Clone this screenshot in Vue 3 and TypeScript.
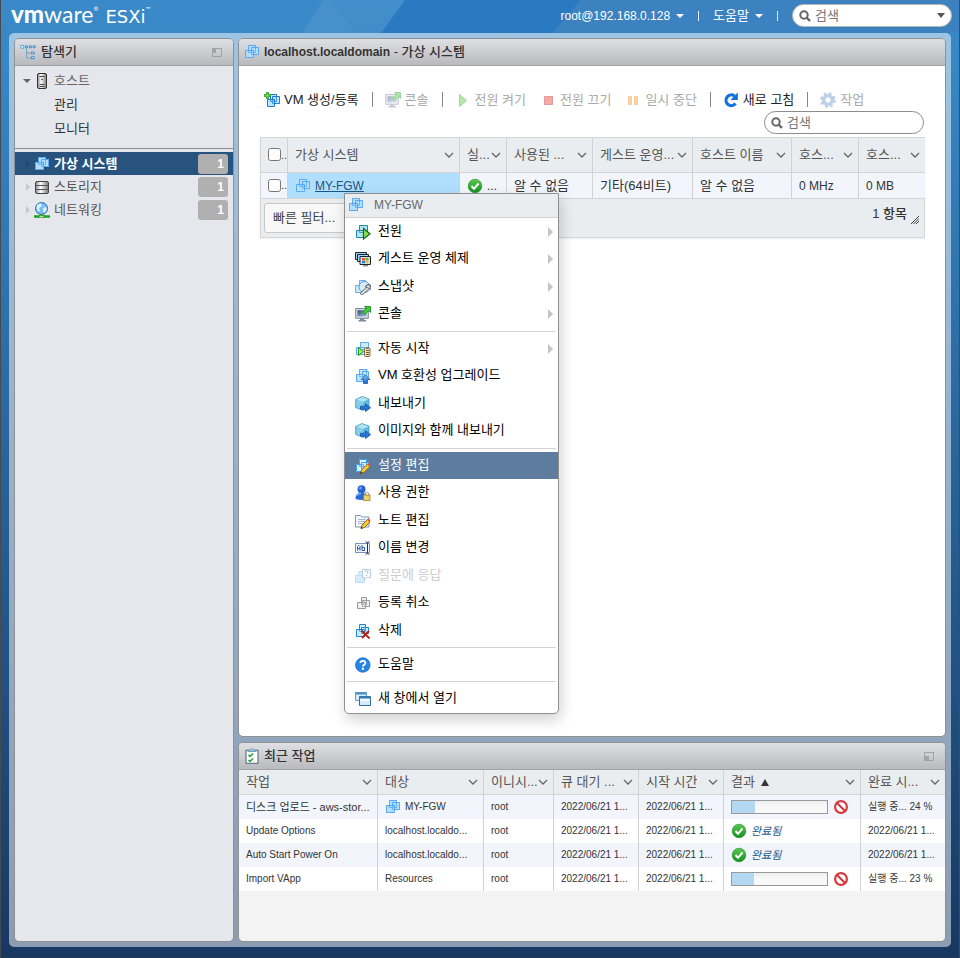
<script setup lang="ts">
import { ref } from 'vue'

interface MenuItem {
  label: string
  icon: string
  sub?: boolean
  active?: boolean
  disabled?: boolean
}
interface Column {
  label: string
  width: number
  sorted?: boolean
}
interface Task {
  name: string
  ko?: boolean
  target: string
  vm?: boolean
  percent?: number
  done: string
}

const globalQuery = ref('')
const vmQuery = ref('')
const quickFilter = ref('빠른 필터...')

const inventory = [
  { label: '가상 시스템', icon: 'vm', count: 1, active: true },
  { label: '스토리지', icon: 'storage', count: 1, active: false },
  { label: '네트워킹', icon: 'network', count: 1, active: false },
]

const toolbar = [
  [{ label: 'VM 생성/등록', icon: 'vm-add', disabled: false }],
  [{ label: '콘솔', icon: 'console', disabled: true }],
  [
    { label: '전원 켜기', icon: 'play', disabled: true },
    { label: '전원 끄기', icon: 'stop', disabled: true },
    { label: '일시 중단', icon: 'pause', disabled: true },
  ],
  [{ label: '새로 고침', icon: 'refresh', disabled: false }],
  [{ label: '작업', icon: 'gear', disabled: true }],
]

const vmColumns: Column[] = [
  { label: '가상 시스템', width: 172 },
  { label: '실...', width: 47 },
  { label: '사용된 ...', width: 86 },
  { label: '게스트 운영...', width: 100 },
  { label: '호스트 이름', width: 99 },
  { label: '호스...', width: 67 },
  { label: '호스...', width: 66 },
]

const menuGroups: MenuItem[][] = [
  [
    { label: '전원', icon: 'vm-power', sub: true },
    { label: '게스트 운영 체제', icon: 'guest', sub: true },
    { label: '스냅샷', icon: 'snapshot', sub: true },
    { label: '콘솔', icon: 'console', sub: true },
  ],
  [
    { label: '자동 시작', icon: 'autostart', sub: true },
    { label: 'VM 호환성 업그레이드', icon: 'upgrade' },
    { label: '내보내기', icon: 'export' },
    { label: '이미지와 함께 내보내기', icon: 'export' },
  ],
  [
    { label: '설정 편집', icon: 'vm-edit', active: true },
    { label: '사용 권한', icon: 'permission' },
    { label: '노트 편집', icon: 'note' },
    { label: '이름 변경', icon: 'rename' },
    { label: '질문에 응답', icon: 'question', disabled: true },
    { label: '등록 취소', icon: 'unregister' },
    { label: '삭제', icon: 'vm-delete' },
  ],
  [{ label: '도움말', icon: 'help' }],
  [{ label: '새 창에서 열기', icon: 'window' }],
]

const taskColumns: Column[] = [
  { label: '작업', width: 139 },
  { label: '대상', width: 106 },
  { label: '이니시...', width: 70 },
  { label: '큐 대기 ...', width: 85 },
  { label: '시작 시간', width: 85 },
  { label: '결과', width: 137, sorted: true },
  { label: '완료 시...', width: 84 },
]

const tasks: Task[] = [
  { name: '디스크 업로드 - aws-stor...', ko: true, target: 'MY-FGW', vm: true, percent: 24, done: '실행 중... 24 %' },
  { name: 'Update Options', target: 'localhost.localdo...', done: '2022/06/21 1...' },
  { name: 'Auto Start Power On', target: 'localhost.localdo...', done: '2022/06/21 1...' },
  { name: 'Import VApp', target: 'Resources', percent: 23, done: '실행 중... 23 %' },
]
</script>

<template>
  <div class="app">
    <svg class="sprite" aria-hidden="true">
      <defs>
        <linearGradient id="g-green" x1="0" y1="0" x2="0" y2="1">
          <stop offset="0" stop-color="#5fc94f" />
          <stop offset="1" stop-color="#109020" />
        </linearGradient>
        <linearGradient id="g-metal" x1="0" y1="0" x2="1" y2="0">
          <stop offset="0" stop-color="#8a8a8a" />
          <stop offset=".4" stop-color="#ffffff" />
          <stop offset="1" stop-color="#777777" />
        </linearGradient>
        <linearGradient id="g-blue" x1="0" y1="0" x2="0" y2="1">
          <stop offset="0" stop-color="#7cc4f7" />
          <stop offset="1" stop-color="#1565c8" />
        </linearGradient>
        <linearGradient id="g-screen" x1="0" y1="0" x2="1" y2="1">
          <stop offset="0" stop-color="#2d4a70" />
          <stop offset="1" stop-color="#a9c4e0" />
        </linearGradient>
      </defs>
      <symbol id="i-vm" viewBox="0 0 16 16">
        <path d="M4 1h8v2h3v8h-5v3H1V6h3z" fill="#c3e6fb" />
        <g fill="#8fd0fa" fill-opacity=".3" stroke="#4a9ff0" stroke-opacity=".85">
          <path d="M4.500 1.500h7v7h-7z" />
          <path d="M7.500 3.500h7v7h-7z" />
          <path d="M1.500 6.500h8v7h-8z" />
        </g>
      </symbol>
      <symbol id="i-vm-add" viewBox="0 0 16 16">
        <path d="M6 2h7v2h3v8h-5v3H3V6h3z" fill="#cdeefc" />
        <g fill="#8fd8f8" fill-opacity=".3" stroke="#1f7bd6">
          <path d="M6.500 2.500h6v7h-6z" />
          <path d="M8.500 4.500h7v7h-7z" />
          <path d="M3.500 7.500h7v7h-7z" />
        </g>
        <path d="M2.500 .500h2v2h2v2h-2v2h-2v-2h-2v-2h2z" fill="#6fdc48" stroke="#1d8a1d" stroke-width=".8" />
      </symbol>
      <symbol id="i-vm-power" viewBox="0 0 16 16">
        <path d="M4 1h9v9H9v4H1V6h3z" fill="#c3edf8" />
        <g fill="#8fd8f0" fill-opacity=".3" stroke="#1b8ba8">
          <path d="M4.500 1.500h8v7h-8z" />
          <path d="M1.500 6.500h8v7h-8z" />
        </g>
        <path d="M8.500 4.500l6.500 5.200-6.500 5.300z" fill="#8be34a" stroke="#12691c" stroke-width="1.200" />
      </symbol>
      <symbol id="i-guest" viewBox="0 0 16 16">
        <path d="M.500 1.500h11v7H.500z" fill="#9fd4f8" stroke="#222" />
        <path d="M2.500 3.500h11v7h-11z" fill="#9fd4f8" stroke="#222" />
        <path d="M5 5.500h10.500v8H5z" fill="#c9e6fa" stroke="#222" />
        <path d="M7 7h3v2.500H7z" fill="#e8582c" /><path d="M10.500 7h3v2.500h-3z" fill="#6cb52d" />
        <path d="M7 10h3v2.300H7z" fill="#2b7de0" /><path d="M10.500 10h3v2.300h-3z" fill="#f6b81f" />
        <path d="M8 14h5v1.500H8z" fill="#999" />
      </symbol>
      <symbol id="i-snapshot" viewBox="0 0 16 16">
        <g fill="#cde9fc" stroke="#66aef2">
          <path d="M4.500 1.500h6v6h-6z" /><path d="M.500 6.500h7v7h-7z" />
        </g>
        <circle cx="9.500" cy="8" r="5.500" fill="#dff0fb" fill-opacity=".85" stroke="#5b9bd0" />
        <path d="M7 14.500l5-5" stroke="#666" stroke-width="3.500" stroke-linecap="round" />
        <path d="M7 14.500l5-5" stroke="#ddd" stroke-width="2" stroke-linecap="round" />
        <path d="M11 9a2.500 2.500 0 1 1 3.500 1.500" fill="none" stroke="#777" stroke-width="1.500" />
      </symbol>
      <symbol id="i-console" viewBox="0 0 16 16">
        <path d="M.700 2.500h12.600v9.800H.700z" fill="#d4dbe4" stroke="#7c8897" />
        <path d="M2.500 4.300h9v6h-9z" fill="url(#g-screen)" />
        <path d="M5 12.500h4v1.500h2v1.500H3.500V14H5z" fill="#7889a0" />
        <path d="M9.500 .500h6v6l-2-2L10 8.500 7.500 6l4-3.500z" fill="#3fd02f" stroke="#12861a" stroke-width=".8" />
      </symbol>
      <symbol id="i-autostart" viewBox="0 0 16 16">
        <path d="M5 1h9v8H9v5H1V6h4z" fill="#d5eefc" />
        <g fill="#c5e6fb" fill-opacity=".3" stroke="#5aa8ee">
          <path d="M5.500 1.500h8v7h-8z" /><path d="M1.500 6.500h8v7h-8z" />
        </g>
        <path d="M3.500 6.500l5 4-5 4z" fill="#a4ef62" stroke="#209a28" />
        <rect x="9.500" y="7" width="5.500" height="8.500" rx="1" fill="#f0e6c0" stroke="#806a3c" />
        <path d="M11 9.500h3M11 11.500h3M11 13.500h3M11 7h2.500" stroke="#6b5a35" />
      </symbol>
      <symbol id="i-upgrade" viewBox="0 0 16 16">
        <path d="M4 1h9v9H9v4H1V6h3z" fill="#c3e6fb" />
        <g fill="#b5defa" fill-opacity=".3" stroke="#5aa8ee">
          <path d="M4.500 1.500h7v7h-7z" /><path d="M7.500 3.500h6v6h-6z" /><path d="M1.500 6.500h8v7h-8z" />
        </g>
        <path d="M10.500 7l4.500 4.500h-2.500v4h-4v-4H6z" fill="url(#g-blue)" stroke="#1b5fae" stroke-width=".8" />
      </symbol>
      <symbol id="i-export" viewBox="0 0 16 16">
        <path d="M7 .500l7 2.500v8.500L8 14.500 .700 11.500V3.500z" fill="#5fbade" />
        <path d="M7 .500l7 2.500-6 3L.700 3.500z" fill="#b5e3f4" />
        <path d="M.700 3.500L8 6v8.500L.700 11.500z" fill="#83cfe9" />
        <path d="M.700 3.500L7 .500l7 2.500v8.500L8 14.500 .700 11.500z" fill="none" stroke="#3b93b9" stroke-width=".7" />
        <path d="M5.500 10.200h5V7.800l5 3.900-5 3.900v-2.400h-5z" fill="#2a77dc" stroke="#134f9e" stroke-width=".8" />
      </symbol>
      <symbol id="i-vm-edit" viewBox="0 0 16 16">
        <path d="M4 1h8v3h2v6H9v4H1V6h3z" fill="#e5f6ff" />
        <g fill="#bfe6fd" fill-opacity=".3" stroke="#3ba0ee">
          <path d="M4.500 1.500h7v7h-7z" /><path d="M1.500 6.500h7v7h-7z" /><path d="M6.500 4.500h7v6h-7z" />
        </g>
        <path d="M5.500 15.500l1-3.500 6-6 2.500 2.500-6 6z" fill="#f7cb36" stroke="#875a12" stroke-width=".9" />
        <path d="M12 6l1.500-1 2 2L14.500 8.500z" fill="#ed5038" /><path d="M5.300 15.700l.600-2 1.400 1.400z" fill="#222" />
      </symbol>
      <symbol id="i-permission" viewBox="0 0 16 16">
        <circle cx="6.500" cy="4.200" r="4" fill="#2763cf" /><circle cx="5.500" cy="3" r="1.500" fill="#6fa6f4" />
        <path d="M.500 14c0-5 2.500-6.500 6-6.500s6 1.500 6 6.500q-6 2-12 0z" fill="#2c69d6" />
        <path d="M2 11q1-3 4-2.500" fill="none" stroke="#7dacf5" stroke-width="1.500" />
        <path d="M9.800 10V8.500q2-2.500 4 0V10" fill="none" stroke="#aaa" stroke-width="1.200" />
        <path d="M8.500 10h6.500v5.500H8.500z" fill="#f0cf63" stroke="#9e7d25" stroke-width=".8" />
      </symbol>
      <symbol id="i-note" viewBox="0 0 16 16">
        <path d="M.500 2.500h5l1.500 1.500h7v10H.500z" fill="#f4f8fd" stroke="#7797bd" />
        <path d="M3 6.500h8M3 8.500h7M3 10.500h5" stroke="#8fa9c6" stroke-width=".8" />
        <path d="M6 15.500l1-3.500 5.500-5.500L15 9l-5.500 5.500z" fill="#f7cb36" stroke="#875a12" stroke-width=".9" />
        <path d="M12 6.500l1.500-1 2 2L14.500 9z" fill="#ed5038" /><path d="M5.800 15.700l.600-2 1.400 1.400z" fill="#222" />
      </symbol>
      <symbol id="i-rename" viewBox="0 0 16 16">
        <path d="M.500 3.500h14v9H.500z" fill="#eef4fc" stroke="#7591b8" />
        <path d="M2.500 10.500v-4l1-1h.500l1 1v4M2.500 8.500H5M7 5v5.500h2.500v-3H7" fill="none" stroke="#3860a8" stroke-width="1" />
        <path d="M10.500 2h1.500l.500.500.500-.500h1.500M12.500 2.500v11M10.500 14h1.500l.500-.500.500.500h1.500" fill="none" stroke="#333" />
      </symbol>
      <symbol id="i-question" viewBox="0 0 16 16">
        <g fill="#8ec9f3" stroke="#4a9ff0"><path d="M3.500 3.500h7v6h-7z" /><path d="M.500 7.500h9v7h-9z" /></g>
        <path d="M7.500 1.500h8v8h-4l-2 2v-2h-2z" fill="#fff" stroke="#3d6f99" />
        <path d="M10 4.300q0-1.300 1.500-1.300T13 4.300q0 .9-1.500 1.700M11.500 7v1" fill="none" stroke="#234" />
      </symbol>
      <symbol id="i-unregister" viewBox="0 0 16 16">
        <g fill="#d8d8d8" fill-opacity=".4" stroke="#9a9a9a">
          <path d="M6.500 2.500h5v7h-5z" /><path d="M7.500 5.500h7v6h-7z" /><path d="M2.500 7.500h8v6h-8z" />
        </g>
      </symbol>
      <symbol id="i-vm-delete" viewBox="0 0 16 16">
        <path d="M5 1h6v3h3v7H9v3H1V6h4z" fill="#d3effd" />
        <g fill="#c5e9fc" fill-opacity=".3" stroke="#1c86dc">
          <path d="M4.500 1.500h6v7h-6z" /><path d="M6.500 4.500h7v6h-7z" /><path d="M1.500 6.500h8v7h-8z" />
        </g>
        <path d="M6.500 7.500l8 8M14 8l-7 7" stroke="#b31d14" stroke-width="1.800" />
      </symbol>
      <symbol id="i-help" viewBox="0 0 16 16">
        <circle cx="7.800" cy="8" r="7.300" fill="#2684e6" stroke="#1a68c2" stroke-width=".7" />
        <path d="M5.300 6q.200-2.200 2.600-2.200T10.400 6q0 1.200-1.400 1.900-1.100.600-1.100 1.600" fill="none" stroke="#fff" stroke-width="1.800" />
        <circle cx="7.900" cy="11.800" r="1.200" fill="#fff" />
      </symbol>
      <symbol id="i-window" viewBox="0 0 16 16">
        <path d="M.500 1.500h11v8H.500z" fill="#d8edfb" stroke="#5e9ccb" /><path d="M.500 2.500h11" stroke="#4d8fc0" stroke-width="2" />
        <path d="M4.500 5.500h11v9h-11z" fill="#d4eafa" stroke="#2f6fa0" /><path d="M5 8h10v2H5z" fill="#f5fbff" /><path d="M4.500 6.500h11" stroke="#3b7fb3" stroke-width="2" />
      </symbol>
      <symbol id="i-tree" viewBox="0 0 18 16">
        <g fill="#fff" stroke="#2c82c9">
          <path d="M1 1h3v3H1z" stroke="#2aa9e6" /><path d="M6 1.500h2v2H6zM10 1.500h2v2h-2zM14 1.500h2v2h-2z" />
          <path d="M12 8h3v2h-3zM12 13h3v2h-3z" />
        </g>
        <path d="M7 4v10.500h4M7 9h4" fill="none" stroke="#6fa0c4" />
      </symbol>
      <symbol id="i-host" viewBox="0 0 16 16">
        <rect x="3.500" y=".500" width="9" height="15" rx="1.500" fill="url(#g-metal)" stroke="#333" />
        <path d="M5.500 3.500h5M5.500 11.500h5M5.500 13.500h5" stroke="#444" /><circle cx="8" cy="6.500" r=".8" fill="#333" />
      </symbol>
      <symbol id="i-storage" viewBox="0 0 16 16">
        <rect x="1.500" y="2.500" width="13" height="12" rx="1.500" fill="url(#g-metal)" stroke="#444" />
        <path d="M1.500 6.500h13M1.500 10.500h13" stroke="#555" />
      </symbol>
      <symbol id="i-network" viewBox="0 0 16 16">
        <circle cx="7.500" cy="6.500" r="6" fill="#79bdf5" stroke="#2668bb" />
        <path d="M3 3q2-2 4-1.500L8 4 5 6l1 3-2 .500L2.500 6zM9 6l3-1 1 2-2.500 4L9 9z" fill="#ddf1ff" />
        <path d="M7.500 12v1M0 14.500h16" stroke="#1ea31e" stroke-width="2.500" /><path d="M5 13.300h5v2.500H5z" fill="#b7e8b0" stroke="#178217" stroke-width=".7" />
      </symbol>
      <symbol id="i-play" viewBox="0 0 16 16"><path d="M4.500 2.500l7 6-7 6z" fill="#5ccc3c" stroke="#379c2b" /></symbol>
      <symbol id="i-stop" viewBox="0 0 16 16"><path d="M4.500 4.500h8v8h-8z" fill="#ee4037" stroke="#bb2018" /></symbol>
      <symbol id="i-pause" viewBox="0 0 16 16"><path d="M3.500 4.500h3v8h-3zM9.500 4.500h3v8h-3z" fill="#f8a43c" stroke="#ef8b28" /></symbol>
      <symbol id="i-refresh" viewBox="0 0 16 16">
        <path d="M12.500 11.500A5.300 5.300 0 1 1 11.500 4" fill="none" stroke="#1270dd" stroke-width="3.200" />
        <path d="M14.800.500V8H7.500z" fill="#1270dd" />
      </symbol>
      <symbol id="i-gear" viewBox="0 0 16 16">
        <circle cx="8" cy="8" r="6.300" fill="none" stroke="#6c98cf" stroke-width="3" stroke-dasharray="2.600 2.350" />
        <circle cx="8" cy="8" r="4.300" fill="none" stroke="#6c98cf" stroke-width="3.500" />
      </symbol>
      <symbol id="i-ok" viewBox="0 0 16 16">
        <circle cx="8" cy="8" r="6.800" fill="url(#g-green)" stroke="#14871f" stroke-width=".6" />
        <path d="M4.500 8l2.500 2.800 4.500-5.300" fill="none" stroke="#fff" stroke-width="2" />
      </symbol>
      <symbol id="i-cancel" viewBox="0 0 16 16">
        <circle cx="8" cy="8" r="5.900" fill="#fff" stroke="#d63a3f" stroke-width="2.200" />
        <path d="M4 4l8 8" stroke="#d63a3f" stroke-width="2.200" />
      </symbol>
      <symbol id="i-tasks" viewBox="0 0 16 16">
        <path d="M2 2.500h12v13H2z" fill="#fff" stroke="#6b7f92" stroke-width="1.300" />
        <path d="M4.500 3.500v-1.500h2q1.500-2.500 3 0h2v1.500z" fill="#a4d0ea" stroke="#5792b4" stroke-width=".8" />
        <path d="M4.500 7l1.500 1.500L9 5.500M4.500 12l1.500 1.500 3-3" fill="none" stroke="#1da32b" stroke-width="1.500" />
      </symbol>
      <symbol id="i-search" viewBox="0 0 12 12">
        <circle cx="5" cy="5" r="3.700" fill="none" stroke="#666" stroke-width="2" />
        <path d="M7.500 7.500L11 11" stroke="#666" stroke-width="2.400" />
      </symbol>
      <symbol id="i-chevron" viewBox="0 0 10 6"><path d="M1 1l4 4 4-4" fill="none" stroke="#666" stroke-width="1.300" /></symbol>
    </svg>

    <header class="topbar">
      <svg class="facets" viewBox="0 0 960 33" preserveAspectRatio="none" aria-hidden="true">
        <path d="M322 0h83l-24 33h-80z" fill="#4a92cd" opacity=".5" />
        <path d="M405 0h176l-28 33H381z" fill="#2a7ac2" />
        <path d="M324 0h4l28 33h-54z" fill="#fff" opacity=".03" />
        <path d="M581 0h379v33H553z" fill="#3c82c0" />
      </svg>
      <h1 class="logo"><b>vm</b><span class="ware">ware</span><sup>®</sup><span class="esxi">ESXi</span><sup>™</sup></h1>
      <nav class="account">
        <button type="button" class="drop">root@192.168.0.128<i class="tri"></i></button>
        <i class="bar"></i>
        <button type="button" class="drop ko">도움말<i class="tri"></i></button>
        <i class="bar"></i>
      </nav>
      <label class="search wide">
        <svg class="mag" aria-hidden="true"><use href="#i-search" /></svg>
        <input v-model="globalQuery" type="text" placeholder="검색" aria-label="전체 검색" />
        <i class="tri dark"></i>
      </label>
    </header>

    <div class="frame">
      <aside class="panel navigator">
        <header class="bar-head">
          <svg class="icon tree" aria-hidden="true"><use href="#i-tree" /></svg>
          <h2>탐색기</h2>
          <button type="button" class="dock left" aria-label="탐색기 접기"></button>
        </header>
        <ul class="host">
          <li class="root"><i class="tri"></i><svg class="icon" aria-hidden="true"><use href="#i-host" /></svg><a href="#host">호스트</a></li>
          <li><a href="#manage">관리</a></li>
          <li><a href="#monitor">모니터</a></li>
        </ul>
        <ul class="inventory">
          <li v-for="n in inventory" :key="n.label" :class="{ active: n.active }">
            <i class="arrow"></i>
            <svg class="icon" aria-hidden="true"><use :href="'#i-' + n.icon" /></svg>
            <a :href="'#' + n.icon">{{ n.label }}</a>
            <span class="badge">{{ n.count }}</span>
          </li>
        </ul>
      </aside>

      <div class="column">
        <main class="panel content">
          <header class="bar-head">
            <svg class="icon" aria-hidden="true"><use href="#i-vm" /></svg>
            <h2><b class="fqdn">localhost.localdomain</b> - 가상 시스템</h2>
          </header>
          <div class="work">
            <div class="toolbar">
              <div v-for="(group, g) in toolbar" :key="g" class="tools">
                <button v-for="t in group" :key="t.label" type="button" :disabled="t.disabled">
                  <svg class="icon" aria-hidden="true"><use :href="'#i-' + t.icon" /></svg>{{ t.label }}
                </button>
              </div>
            </div>
            <label class="search">
              <svg class="mag" aria-hidden="true"><use href="#i-search" /></svg>
              <input v-model="vmQuery" type="text" placeholder="검색" aria-label="가상 시스템 검색" />
            </label>

            <div class="grid">
              <table class="vms">
                <colgroup>
                  <col class="check-col" />
                  <col v-for="(c, i) in vmColumns" :key="i" :style="{ width: c.width + 'px' }" />
                </colgroup>
                <thead>
                  <tr>
                    <th class="check"><input type="checkbox" aria-label="모두 선택" /><span>..</span></th>
                    <th v-for="(c, i) in vmColumns" :key="i">
                      <div class="th"><span>{{ c.label }}</span><svg class="chev" aria-hidden="true"><use href="#i-chevron" /></svg></div>
                    </th>
                  </tr>
                </thead>
                <tbody>
                  <tr>
                    <td class="check"><input type="checkbox" aria-label="MY-FGW 선택" /><span>..</span></td>
                    <td class="picked"><div class="cell"><svg class="icon" aria-hidden="true"><use href="#i-vm" /></svg><a href="#my-fgw">MY-FGW</a></div></td>
                    <td><div class="cell"><svg class="icon" aria-hidden="true"><use href="#i-ok" /></svg>...</div></td>
                    <td class="ko">알 수 없음</td>
                    <td class="ko">기타(64비트)</td>
                    <td class="ko">알 수 없음</td>
                    <td>0 MHz</td>
                    <td>0 MB</td>
                  </tr>
                </tbody>
              </table>
              <div class="foot">
                <select v-model="quickFilter" aria-label="빠른 필터"><option>빠른 필터...</option></select>
                <span class="count">1 항목</span>
                <svg class="grip" viewBox="0 0 8 8" aria-hidden="true"><path d="M0 8L8 0M2.500 8L8 2.500M5 8l3-3" stroke="#444" /></svg>
              </div>

              <div class="menu" role="menu">
                <div class="menu-head"><svg class="icon" aria-hidden="true"><use href="#i-vm" /></svg>MY-FGW</div>
                <div v-for="(group, g) in menuGroups" :key="g" class="menu-group">
                  <button
                    v-for="m in group"
                    :key="m.label"
                    type="button"
                    role="menuitem"
                    :disabled="m.disabled"
                    :class="{ active: m.active }"
                  >
                    <svg class="icon" aria-hidden="true"><use :href="'#i-' + m.icon" /></svg>
                    <span>{{ m.label }}</span>
                    <i v-if="m.sub" class="arrow"></i>
                  </button>
                </div>
              </div>
            </div>
          </div>
        </main>

        <section class="panel recent">
          <header class="bar-head">
            <svg class="icon" aria-hidden="true"><use href="#i-tasks" /></svg>
            <h2>최근 작업</h2>
            <button type="button" class="dock low" aria-label="최근 작업 접기"></button>
          </header>
          <table class="tasks">
            <colgroup>
              <col v-for="c in taskColumns" :key="c.label" :style="{ width: c.width + 'px' }" />
            </colgroup>
            <thead>
              <tr>
                <th v-for="c in taskColumns" :key="c.label">
                  <div class="th"><span>{{ c.label }}<i v-if="c.sorted" class="sort"></i></span><svg class="chev" aria-hidden="true"><use href="#i-chevron" /></svg></div>
                </th>
              </tr>
            </thead>
            <tbody>
              <tr v-for="t in tasks" :key="t.name">
                <td :class="{ hangul: t.ko }">{{ t.name }}</td>
                <td><div class="cell"><svg v-if="t.vm" class="icon" aria-hidden="true"><use href="#i-vm" /></svg>{{ t.target }}</div></td>
                <td>root</td>
                <td>2022/06/21 1...</td>
                <td>2022/06/21 1...</td>
                <td>
                  <div v-if="t.percent" class="cell progress">
                    <div class="track"><div class="fill" :style="{ width: t.percent + '%' }"></div></div>
                    <button type="button" aria-label="작업 취소"><svg class="icon" aria-hidden="true"><use href="#i-cancel" /></svg></button>
                  </div>
                  <div v-else class="cell"><svg class="icon" aria-hidden="true"><use href="#i-ok" /></svg><em>완료됨</em></div>
                </td>
                <td>{{ t.done }}</td>
              </tr>
            </tbody>
          </table>
        </section>
      </div>
    </div>
  </div>
</template>

<style>
body {
  background: #1a3a63;
}
</style>

<style scoped>
.app,
.app * {
  box-sizing: border-box;
}
.app {
  position: relative;
  min-height: 100vh;
  display: flex;
  flex-direction: column;
  padding-bottom: 10px;
  border: 1px solid #454b50;
  border-top: 0;
  border-bottom-color: #243c55;
  background: linear-gradient(#3a89c8 0, #3887c5 60px, #183862 100%);
  font: 12px/16px "Liberation Sans", "Noto Sans CJK KR", sans-serif;
  color: #333;
}
.sprite {
  position: absolute;
  width: 0;
  height: 0;
}
button,
input,
select {
  font: inherit;
  color: inherit;
}
button {
  padding: 0;
  border: 0;
  background: none;
}
a {
  color: inherit;
  text-decoration: none;
}
ul {
  list-style: none;
  margin: 0;
  padding: 0;
}
h1,
h2 {
  margin: 0;
}
.icon {
  width: 16px;
  height: 16px;
  flex: none;
  display: block;
}
.ko {
  font-size: 13px;
}

/* Top bar */
.topbar {
  position: relative;
  height: 33px;
  display: flex;
  align-items: center;
  padding: 0 7px 2px 10px;
  color: #fff;
}
.facets {
  position: absolute;
  inset: 0;
  width: 100%;
  height: 100%;
}
.logo {
  position: relative;
  display: flex;
  align-items: baseline;
  font: 400 23px/24px Lato, sans-serif;
  margin-right: auto;
}
.logo b {
  font-weight: 900;
  font-size: 24px;
}
.logo sup {
  font-size: 6px;
  line-height: 6px;
  align-self: flex-start;
  padding-top: 4px;
}
.logo .esxi {
  margin-left: 7px;
  font-family: "DejaVu Sans", sans-serif;
  font-size: 18px;
}
.account {
  position: relative;
  display: flex;
  align-items: center;
  gap: 14px;
  margin-right: 14px;
}
.drop {
  display: flex;
  align-items: center;
  gap: 6px;
}
.bar {
  width: 1px;
  height: 10px;
  background: #e6f0f8;
}
.tri {
  border: 4px solid transparent;
  border-top-color: currentColor;
  border-bottom: 0;
}
.tri.dark {
  border-width: 5px 4px 0;
  border-top-color: #555;
}
.search {
  position: relative;
  display: flex;
  align-items: center;
  gap: 4px;
  width: 160px;
  height: 23px;
  padding: 0 6px;
  border: 1px solid #8c8c8c;
  border-radius: 12px;
  background: #fff;
  color: #666;
}
.search.wide {
  border-color: #b5b5b5;
}
.search input {
  flex: 1;
  min-width: 0;
  padding: 0;
  border: 0;
  outline: 0;
  background: none;
  font-size: 13px;
}
.search input::placeholder {
  color: #757575;
  opacity: 1;
}
.mag {
  width: 12px;
  height: 12px;
}

/* Panels */
.frame {
  flex: 1;
  display: flex;
  gap: 4px;
  margin: 0 8px;
  padding: 5px;
  border-radius: 5px;
  background: rgba(255, 255, 255, 0.5);
}
.column {
  flex: 1;
  min-width: 0;
  display: flex;
  flex-direction: column;
  gap: 5px;
}
.panel {
  border: 1px solid #919191;
  border-radius: 5px;
  background: #fff;
}
.bar-head {
  display: flex;
  align-items: center;
  gap: 4px;
  height: 27px;
  padding: 0 11px 0 5px;
  border-bottom: 1px solid #a3a3a6;
  border-radius: 4px 4px 0 0;
  background: linear-gradient(#dfe0e4, #b9babe);
}
.bar-head h2 {
  flex: 1;
  padding-bottom: 1px;
  font-size: 13px;
  line-height: 18px;
  font-weight: 500;
}
.fqdn {
  font-size: 12px;
}
.icon.tree {
  width: 17px;
}
.dock {
  width: 10px;
  height: 9px;
  border: 1px solid #a2a3a5;
}
.dock.left {
  background: linear-gradient(#a2a3a5, #a2a3a5) 0 0 / 3px 4px no-repeat;
}
.dock.low {
  background: linear-gradient(#a2a3a5, #a2a3a5) 0 100% / 4px 4px no-repeat;
}

/* Navigator */
.navigator {
  width: 220px;
  flex: none;
  background: #e6e7ec;
}
.host {
  padding: 3px 0 7px;
  border-bottom: 1px solid #8f8f92;
  font-size: 13px;
}
.host li {
  display: flex;
  align-items: center;
  height: 24px;
  padding-left: 39px;
}
.host .root {
  padding-left: 8px;
  color: #666;
}
.host .root .icon {
  margin: 0 4px 0 3px;
}
.inventory {
  padding-top: 3px;
  font-size: 13px;
  color: #555;
}
.inventory li {
  display: flex;
  align-items: center;
  height: 23px;
  padding: 0 5px 0 11px;
}
.inventory .icon {
  margin: 0 4px;
}
.inventory a {
  flex: 1;
}
.inventory .active {
  background: #29537f;
  color: #fff;
  font-weight: 700;
}
.arrow {
  border: 4px solid transparent;
  border-left: 4px solid #c8c8cc;
  border-right: 0;
}
.inventory .active .arrow {
  border-left-color: #244a73;
}
.badge {
  width: 30px;
  height: 20px;
  padding-right: 4px;
  border-radius: 3px;
  background: #b0b0b0;
  color: #fff;
  font-size: 12px;
  font-weight: 700;
  line-height: 20px;
  text-align: right;
}

/* Virtual machines */
.content {
  flex: 1;
  background: #fff;
}
.work {
  padding: 22px 20px 0 21px;
  display: flex;
  flex-direction: column;
}
.toolbar {
  display: flex;
  align-items: center;
  height: 23px;
  padding-left: 4px;
}
.tools {
  display: flex;
  gap: 14px;
}
.tools + .tools {
  margin-left: 13px;
  padding-left: 13px;
  background: linear-gradient(#888, #888) 0 50% / 1px 15px no-repeat;
}
.tools button {
  display: flex;
  align-items: center;
  gap: 4px;
  color: #222;
  font-size: 13px;
  line-height: 20px;
  white-space: nowrap;
}
.tools button:disabled {
  color: #a9a9a9;
}
.tools button:disabled .icon {
  opacity: 0.45;
}
.work > .search {
  align-self: flex-end;
  margin-right: 1px;
}
.grid {
  position: relative;
  margin-top: 3px;
  border: 1px solid #d3d5d7;
  background: #e9edf0;
  box-shadow: 0 1px 2px rgba(0, 0, 0, 0.06);
}
table {
  width: 100%;
  border-collapse: separate;
  border-spacing: 0;
  table-layout: fixed;
}
th,
td {
  padding: 0 0 0 7px;
  border-bottom: 1px solid #d3d5d7;
  border-right: 1px solid #d0d2d4;
  text-align: left;
  font-weight: 400;
  white-space: nowrap;
  overflow: hidden;
}
th:last-child,
td:last-child {
  border-right: 0;
}
.check-col {
  width: 27px;
}
th {
  background: #e9edf0;
  color: #555;
  font-size: 13px;
}
.th,
.cell {
  display: flex;
  align-items: center;
}
.th {
  justify-content: space-between;
  padding-right: 5px;
}
.th span {
  min-width: 0;
  overflow: hidden;
}
.chev {
  width: 10px;
  height: 6px;
  flex: none;
}
.vms th {
  height: 35px;
}
.vms td {
  height: 26px;
  background: #f2f6fc;
}
.vms td.picked {
  background: #b0dffe;
}
.vms .cell {
  gap: 4px;
}
.vms a {
  color: #1d5380;
  text-decoration: underline;
}
.check {
  font-size: 11px;
}
.check input {
  width: 13px;
  height: 13px;
  margin: 0 0 2px;
  vertical-align: middle;
}
.foot {
  display: flex;
  height: 38px;
  padding: 4px 5px 0 3px;
}
.foot select {
  appearance: none;
  width: 120px;
  height: 30px;
  padding: 0 8px;
  border: 1px solid #c6c8ca;
  border-radius: 3px;
  background: #f8f8f8;
  color: #444;
  font-size: 13px;
}
.count {
  margin-left: auto;
  padding: 3px 4px 0 0;
  font-size: 13px;
  font-weight: 500;
}
.grip {
  width: 8px;
  height: 8px;
  margin-top: 13px;
}

/* Context menu */
.menu {
  position: absolute;
  left: 83px;
  top: 55px;
  width: 215px;
  border: 1px solid #8f8f8f;
  border-radius: 0 0 5px 5px;
  background: #fff;
  box-shadow: 2px 6px 14px rgba(0, 0, 0, 0.18);
  color: #000;
}
.menu-head {
  display: flex;
  align-items: center;
  gap: 10px;
  height: 24px;
  padding: 0 0 1px 3px;
  border-bottom: 1px solid #cfd1d3;
  background: #e9edf0;
  color: #666;
}
.menu-group {
  display: flex;
  flex-direction: column;
  padding-bottom: 3px;
}
.menu-group + .menu-group {
  padding-top: 4px;
  background: linear-gradient(#d3d3d3, #d3d3d3) 2px 0 / calc(100% - 4px) 1px no-repeat;
}
.menu-group:last-child {
  padding-bottom: 1px;
}
.menu-group button {
  display: flex;
  align-items: center;
  gap: 7px;
  height: 27px;
  padding: 0 5px 0 10px;
  font-size: 13px;
  line-height: 18px;
  text-align: left;
}
.menu-group button:nth-child(even) {
  height: 28px;
}
.menu-group span {
  flex: 1;
  padding-bottom: 2px;
}
.menu-group .active {
  background: #5e7c9e;
  color: #fff;
}
.menu-group :disabled {
  color: #ccc;
}
.menu-group :disabled .icon {
  opacity: 0.35;
}
.menu .arrow {
  border-width: 5px 0 5px 5px;
  border-left-color: #c4c4c4;
}

/* Recent tasks */
.recent {
  flex: none;
  min-height: 200px;
  background: #f3f3f3;
}
.tasks {
  font-size: 10px;
}
.tasks th {
  height: 25px;
}
.tasks td {
  height: 24px;
  border-bottom: 0;
  background: #fff;
}
.tasks tr:nth-child(odd) td {
  background: #f2f6fc;
}
.tasks td.hangul {
  font-size: 11px;
}
.tasks .cell {
  gap: 4px;
}
.sort {
  display: inline-block;
  margin-left: 6px;
  border: 4px solid transparent;
  border-top: 0;
  border-bottom: 7px solid #333;
}
.tasks em {
  font-size: 11px;
  color: #22588c;
}
.progress .track {
  flex: 1;
  height: 14px;
  border: 1px solid #999;
  background: linear-gradient(#ededed, #f8f8f8 5px);
}
.progress .fill {
  height: 100%;
  background: #b3d8f2;
}
.progress button {
  margin: 0 11px 0 1px;
}
</style>
